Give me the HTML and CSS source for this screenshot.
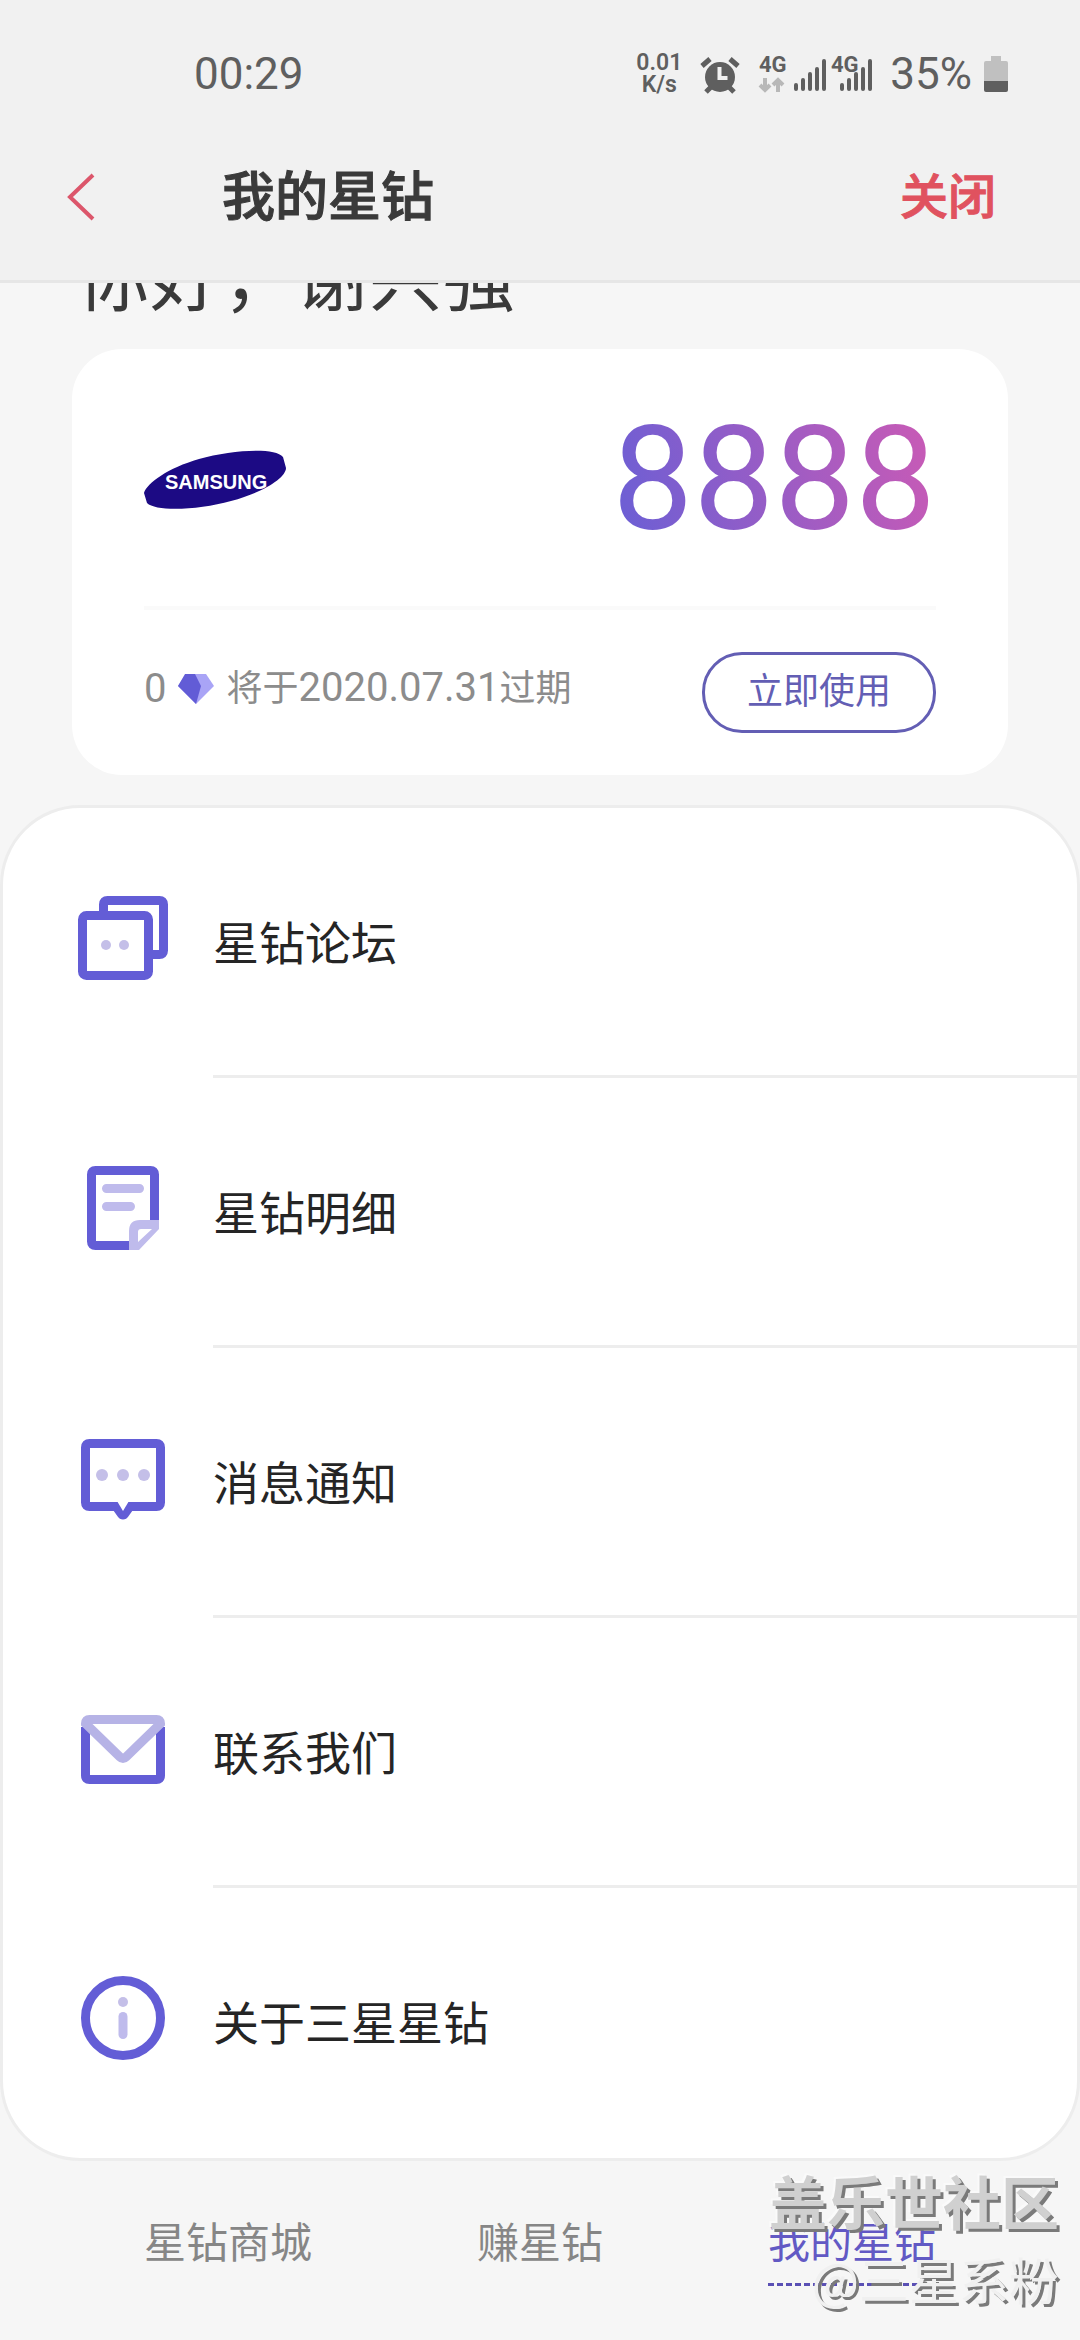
FILE: index.html
```html
<!DOCTYPE html>
<html lang="zh-CN">
<head>
<meta charset="utf-8">
<meta name="viewport" content="width=device-width, initial-scale=1">
<title>我的星钻</title>
<link rel="stylesheet" href="styles.css">
</head>
<body>
<div class="page">
  <div class="top">
    <div class="status">
      <time class="clock">00:29</time>
      <div class="indicators">
        <div class="speed"><span>0.01</span><span>K/s</span></div>
        <svg class="alarm" viewBox="0 0 52 40" aria-hidden="true">
          <circle cx="26" cy="23" r="15" fill="#5f5f5f"/>
          <path d="M8 12l8-7M44 12l-8-7M12 38l5-5M40 38l-5-5" stroke="#5f5f5f" stroke-width="5" fill="none"/>
          <path d="M25.500 13v11h8" stroke="#f1f1f1" stroke-width="4" fill="none"/>
        </svg>
        <svg class="signal" viewBox="0 0 120 40" aria-hidden="true">
          <text class="net" x="1" y="18">4G</text>
          <path d="M7 24v12M2 31l5 5 5-5M20 38V26M15 31l5-5 5 5" stroke="#b8b8b8" stroke-width="4" fill="none"/>
          <path d="M38 31v4M45 26v9M52 20v15M59 15v20M66 7v28M84 31v4M91 26v9M98 20v15M105 15v20M112 7v28" stroke="#5f5f5f" stroke-width="4" stroke-linecap="round" fill="none"/>
          <text class="net" x="73" y="18">4G</text>
        </svg>
        <span class="percent">35%</span>
        <svg class="battery" viewBox="0 0 24 36" aria-hidden="true">
          <path d="M7 0h10v5h5q2 0 2 2v18H0V7q0-2 2-2h5z" fill="#c0c0c0"/>
          <path d="M0 25h24v9q0 2-2 2H2q-2 0-2-2z" fill="#5f5f5f"/>
        </svg>
      </div>
    </div>
    <header class="header">
      <button class="back" type="button" aria-label="返回">
        <svg viewBox="0 0 32 48" aria-hidden="true"><path d="M29 1L6 23l23 22" fill="none" stroke="#dc566b" stroke-width="4"/></svg>
      </button>
      <h1 class="title">我的星钻</h1>
      <button class="close" type="button">关闭</button>
    </header>
  </div>

  <main class="content">
    <p class="greeting">你好，谢兴强</p>
    <section class="card">
      <div class="balance">
        <svg class="logo" viewBox="0 0 142 60" role="img" aria-label="SAMSUNG">
          <path d="M0 43C3 33 24 18 55 9C87 0 131-3 139 7L142 18C142 28 118 43 87 51C55 60 12 62 3 53Z" fill="#1c0a84"/>
          <text class="brand" x="21" y="39">SAMSUNG</text>
        </svg>
        <strong class="points">8888</strong>
      </div>
      <div class="expiry">
        <p class="note"><span class="num">0</span>
          <svg class="gem" viewBox="0 0 36 30" aria-hidden="true">
            <path d="M8 0h20l8 12-18 18L0 12z" fill="#a9a4f6"/>
            <path d="M7 0h10l6 12-5 18L0 12z" fill="#625cd6"/>
          </svg>
          <span>将于<span class="num">2020.07.31</span>过期</span></p>
        <button class="use" type="button">立即使用</button>
      </div>
    </section>

    <nav class="menu" aria-label="菜单">
      <a class="item" href="#forum">
        <svg class="icon" viewBox="0 0 92 92" aria-hidden="true">
          <path d="M28.500 18V11.500q0-4 4-4h52q4 0 4 4v46q0 4-4 4H78" class="line"/>
          <rect x="7.500" y="22.500" width="66" height="60" rx="4" class="line"/>
          <circle cx="31" cy="52" r="5" class="soft"/><circle cx="49" cy="52" r="5" class="soft"/>
        </svg>
        <span class="label">星钻论坛</span>
      </a>
      <a class="item" href="#details">
        <svg class="icon" viewBox="0 0 92 92" aria-hidden="true">
          <path d="M54 82.500H20.500q-4 0-4-4v-67q0-4 4-4h55q4 0 4 4V57" class="line"/>
          <path d="M31.500 25.500h33M31.500 43.500h24" class="softline round"/>
          <path d="M54 87V68q0-11 11-11h19v9L64 87zM63 79l14-13H66q-3 0-3 3z" class="fold"/>
        </svg>
        <span class="label">星钻明细</span>
      </a>
      <a class="item" href="#messages">
        <svg class="icon" viewBox="0 0 92 92" aria-hidden="true">
          <path d="M14.500 10.500h67q4 0 4 4v55q0 4-4 4H55l-5 7q-2 3-4 0l-5-7H14.500q-4 0-4-4v-55q0-4 4-4z" class="line"/>
          <path d="M42 68h12l-6 10z" class="hide"/>
          <circle cx="27" cy="42" r="6" class="soft"/><circle cx="48" cy="42" r="6" class="soft"/><circle cx="69" cy="42" r="6" class="soft"/>
        </svg>
        <span class="label">消息通知</span>
      </a>
      <a class="item" href="#contact">
        <svg class="icon" viewBox="0 0 92 92" aria-hidden="true">
          <path d="M10.500 24v48.500q0 4 4 4h67q4 0 4-4V24" class="line"/>
          <path d="M14.500 16.500h67q4 0 4 4L51 54q-3 3-6 0L10.500 20.500q0-4 4-4z" class="mail"/>
        </svg>
        <span class="label">联系我们</span>
      </a>
      <a class="item" href="#about">
        <svg class="icon" viewBox="0 0 92 92" aria-hidden="true">
          <circle cx="48" cy="45" r="37.500" class="line"/>
          <circle cx="48" cy="29" r="5" class="soft"/>
          <path d="M48 43.500v18" class="softline round"/>
        </svg>
        <span class="label">关于三星星钻</span>
      </a>
    </nav>
  </main>

  <nav class="tabs" aria-label="底部导航">
    <a class="tab" href="#mall"><span>星钻商城</span></a>
    <a class="tab" href="#earn"><span>赚星钻</span></a>
    <a class="tab active" href="#mine" aria-current="page"><span>我的星钻</span></a>
  </nav>

  <div class="watermark">
    <span class="site">盖乐世社区</span>
    <span class="author">@三星系粉</span>
  </div>
</div>
</body>
</html>
```
FILE: styles.css
```css
* {
  box-sizing: border-box;
}

body {
  margin: 0;
  background: #f6f6f6;
  color: #3a3a3a;
  font-family: Roboto, "Noto Sans CJK SC", sans-serif;
}

button {
  margin: 0;
  padding: 0;
  border: 0;
  background: none;
  font-family: inherit;
  cursor: pointer;
}

a {
  color: inherit;
  text-decoration: none;
}

p,
h1 {
  margin: 0;
}

svg {
  display: block;
  flex: none;
  overflow: visible;
}

.page {
  position: relative;
  display: flex;
  flex-direction: column;
  min-height: 100vh;
  overflow: hidden;
}

/* Status bar and header */
.top {
  background: #f1f1f1;
  border-bottom: 3px solid #e6e6e6;
}

.status {
  display: flex;
  align-items: center;
  justify-content: space-between;
  padding: 44px 72px 0 194px;
  color: #5f5f5f;
  font-size: 44px;
  line-height: 60px;
}

.indicators {
  display: flex;
  align-items: center;
  gap: 12px;
}

.speed {
  display: flex;
  flex-direction: column;
  align-items: center;
  font-size: 23px;
  font-weight: 600;
  line-height: 22px;
}

.alarm {
  width: 52px;
  height: 40px;
}

.signal {
  width: 120px;
  height: 40px;
}

.net {
  fill: #5f5f5f;
  font-size: 22px;
  font-weight: 700;
}

.battery {
  width: 24px;
  height: 36px;
}

.header {
  display: flex;
  align-items: center;
  padding: 54px 84px 42px 64px;
}

.back {
  width: 158px;
}

.back svg {
  width: 32px;
  height: 48px;
}

.title {
  flex: 1;
  font-size: 53px;
  font-weight: 500;
  line-height: 80px;
  -webkit-text-stroke: 1px currentColor;
}

.close {
  color: #e0525f;
  font-size: 48px;
  font-weight: 500;
  line-height: 80px;
  -webkit-text-stroke: 1px currentColor;
}

/* Scrolled content */
.content {
  overflow: hidden;
}

.greeting {
  margin-top: -51px;
  padding: 0 77px;
  font-size: 73px;
  line-height: 96px;
}

.card {
  margin: 21px 72px 30px;
  padding: 0 72px;
  border-radius: 50px;
  background: #fff;
}

.balance {
  display: flex;
  align-items: center;
  justify-content: space-between;
  padding: 46px 0 42px;
  border-bottom: 4px solid #fafafa;
}

.logo {
  width: 142px;
  height: 60px;
}

.brand {
  fill: #fff;
  font-family: "Liberation Sans Narrow", "Liberation Sans", sans-serif;
  font-size: 20px;
  font-weight: 700;
}

.points {
  background: linear-gradient(75deg, #675fd6, #cd5ab4);
  background-clip: text;
  -webkit-background-clip: text;
  color: transparent;
  font-size: 144px;
  font-weight: 400;
  line-height: 169px;
}

.expiry {
  display: flex;
  align-items: center;
  justify-content: space-between;
  padding: 42px 0;
}

.note {
  display: flex;
  align-items: center;
  gap: 12px;
  padding-bottom: 8px;
  color: #8c8c8c;
  font-size: 36px;
  line-height: 48px;
}

.num {
  font-size: 40px;
}

.gem {
  width: 36px;
  height: 30px;
}

.use {
  padding: 0 42px;
  border: 3px solid #635eb4;
  border-radius: 40px;
  color: #635eb4;
  font-size: 36px;
  line-height: 75px;
}

/* Menu */
.menu {
  border: 3px solid #ededed;
  border-radius: 80px;
  background: #fff;
}

.item {
  display: flex;
  align-items: center;
  padding-left: 72px;
  color: #252525;
}

.icon {
  width: 92px;
  height: 92px;
  margin: 0 46px 8px 0;
}

.label {
  flex: 1;
  padding-top: 6px;
  border-bottom: 3px solid #ededed;
  font-size: 46px;
  line-height: 261px;
}

.item:last-child .label {
  border-color: transparent;
}

.line {
  fill: none;
  stroke: #635dd6;
  stroke-width: 9;
}

.soft {
  fill: #c4bfe8;
}

.fold {
  fill: #bfbbec;
  fill-rule: evenodd;
}

.softline {
  fill: none;
  stroke: #bfbbec;
  stroke-width: 9;
}

.round {
  stroke-linecap: round;
}

.mail {
  fill: #fff;
  stroke: #b6b3e6;
  stroke-width: 9;
}

.hide {
  fill: #fff;
}

/* Bottom tabs */
.tabs {
  display: grid;
  grid-template-columns: repeat(3, 1fr);
  padding: 44px 72px;
  color: #868686;
  font-size: 42px;
  line-height: 78px;
}

.tab {
  display: flex;
  justify-content: center;
}

.active span {
  border-bottom: 3px dashed #5a50b4;
  color: #6259c4;
}

/* Stamp laid over the bottom corner */
.watermark {
  position: absolute;
  right: 21px;
  bottom: 24px;
  display: flex;
  flex-direction: column;
  align-items: flex-end;
  font-family: "Noto Sans CJK SC", sans-serif;
  pointer-events: none;
}

.site {
  color: #d0d0d0;
  font-size: 58px;
  font-weight: 700;
  line-height: 80px;
  text-shadow: 3px 3px 0 #7a7a7a, -2px -2px 0 #fafafa;
}

.author {
  color: #f0f0f0;
  font-size: 50px;
  line-height: 76px;
  text-shadow: 3px 3px 0 #7a7a7a;
}
```
